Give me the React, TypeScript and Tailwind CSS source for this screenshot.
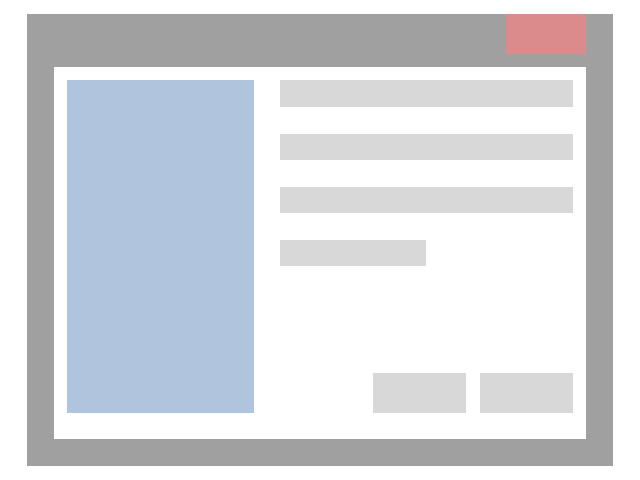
export default function App() {
  return (
    <div className="w-[640px] h-[480px] bg-white pt-[14px] pl-[27px]">
      <div className="w-[586px] h-[452px] bg-[#a0a0a0] flex flex-col">
        <div className="self-end mr-[27px] w-[80px] h-[40px] bg-[#db8b8b]" />
        <div className="mt-[13px] mx-[27px] h-[372px] bg-white pt-[13px] px-[13px] pb-[26px] flex">
          <div className="w-[187px] h-[333px] bg-[#b0c4de]" />
          <div className="ml-[26px] flex-1 flex flex-col">
            <div className="h-[27px] bg-[#d8d8d8]" />
            <div className="mt-[27px] h-[26px] bg-[#d8d8d8]" />
            <div className="mt-[27px] h-[26px] bg-[#d8d8d8]" />
            <div className="mt-[27px] w-[146px] h-[26px] bg-[#d8d8d8]" />
            <div className="mt-auto flex justify-end gap-[14px]">
              <div className="w-[93px] h-[40px] bg-[#d8d8d8]" />
              <div className="w-[93px] h-[40px] bg-[#d8d8d8]" />
            </div>
          </div>
        </div>
      </div>
    </div>
  );
}
